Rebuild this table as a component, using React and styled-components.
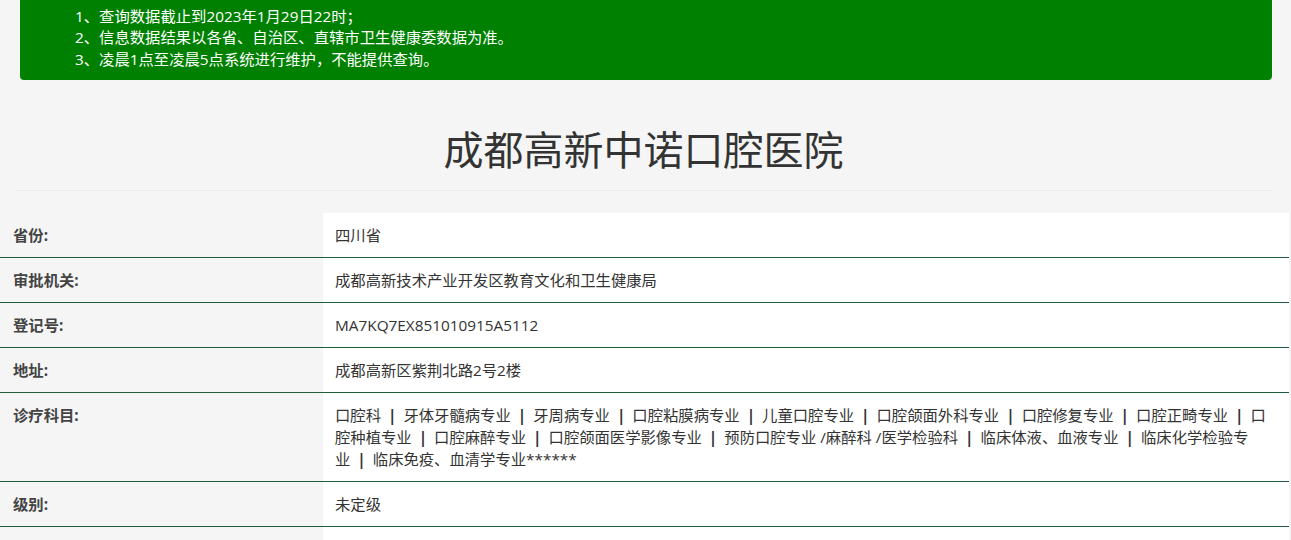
import React from 'react'
import styled, { createGlobalStyle } from 'styled-components'

const GlobalStyle = createGlobalStyle`
  body{
    margin:0;
    background:#f5f5f5;
    font-family:"Open Sans","Noto Sans CJK SC",sans-serif;
    color:#333;
  }
`

const notes = [
  '1、查询数据截止到2023年1月29日22时；',
  '2、信息数据结果以各省、自治区、直辖市卫生健康委数据为准。',
  '3、凌晨1点至凌晨5点系统进行维护，不能提供查询。',
]

const departments = [
  '口腔科', '牙体牙髓病专业', '牙周病专业', '口腔粘膜病专业', '儿童口腔专业',
  '口腔颌面外科专业', '口腔修复专业', '口腔正畸专业', '口腔种植专业', '口腔麻醉专业',
  '口腔颌面医学影像专业', '预防口腔专业 /麻醉科 /医学检验科', '临床体液、血液专业',
  '临床化学检验专业', '临床免疫、血清学专业******',
]

const rows = [
  { label: '省份:', value: '四川省' },
  { label: '审批机关:', value: '成都高新技术产业开发区教育文化和卫生健康局' },
  { label: '登记号:', value: 'MA7KQ7EX851010915A5112' },
  { label: '地址:', value: '成都高新区紫荆北路2号2楼' },
  { label: '诊疗科目:', list: departments },
  { label: '级别:', value: '未定级' },
  { label: '', value: '' },
]

function App() {
  return (
    <Page>
      <GlobalStyle />
      <Notice>
        {notes.map(n => <NoticeLine key={n}>{n}</NoticeLine>)}
      </Notice>
      <Title>成都高新中诺口腔医院</Title>
      <Divider />
      <InfoTable>
        {rows.map((r, i) => (
          <Row key={i}>
            <Label>{r.label}</Label>
            <Value>
              {r.list
                ? r.list.map((d, j) => (
                    <React.Fragment key={d}>
                      {j > 0 && <Sep>|</Sep>}
                      {d}
                    </React.Fragment>
                  ))
                : r.value}
            </Value>
          </Row>
        ))}
      </InfoTable>
    </Page>
  )
}

const Page = styled.div`
  display:flex;
  flex-direction:column;
  width:1291px;`

const Notice = styled.ul`
  list-style:none;
  margin:0 19px 0 20px;
  padding:6px 15px 10px 55px;
  background:#008000;
  border-radius:0 0 4px 4px;
  color:#fff;
  font-size:15.33px;
  line-height:21.3px;`

const NoticeLine = styled.li`
  white-space:nowrap;`

const Title = styled.h1`
  margin:48px 19px 18px 15px;
  text-align:center;
  font-size:40px;
  line-height:44px;
  font-weight:400;
  color:#333;`

const Divider = styled.hr`
  margin:0 19px 22px 15px;
  border:0;
  border-top:1px solid #eaeaea;`

const InfoTable = styled.div`
  display:flex;
  flex-direction:column;
  width:1289px;`

const Row = styled.div`
  display:grid;
  grid-template-columns:323px 1fr;
  border-bottom:1px solid #1d5c3c;
  font-size:15.33px;
  line-height:22px;`

const Label = styled.div`
  padding:11px 13px;
  font-weight:700;
  color:#444;
  background:#f5f5f5;
  min-height:22px;`

const Value = styled.div`
  padding:11px 12px;
  background:#fff;
  color:#333;`

const Sep = styled.span`
  padding:0 7px;
  font-weight:700;
  color:#333;`

export default App
